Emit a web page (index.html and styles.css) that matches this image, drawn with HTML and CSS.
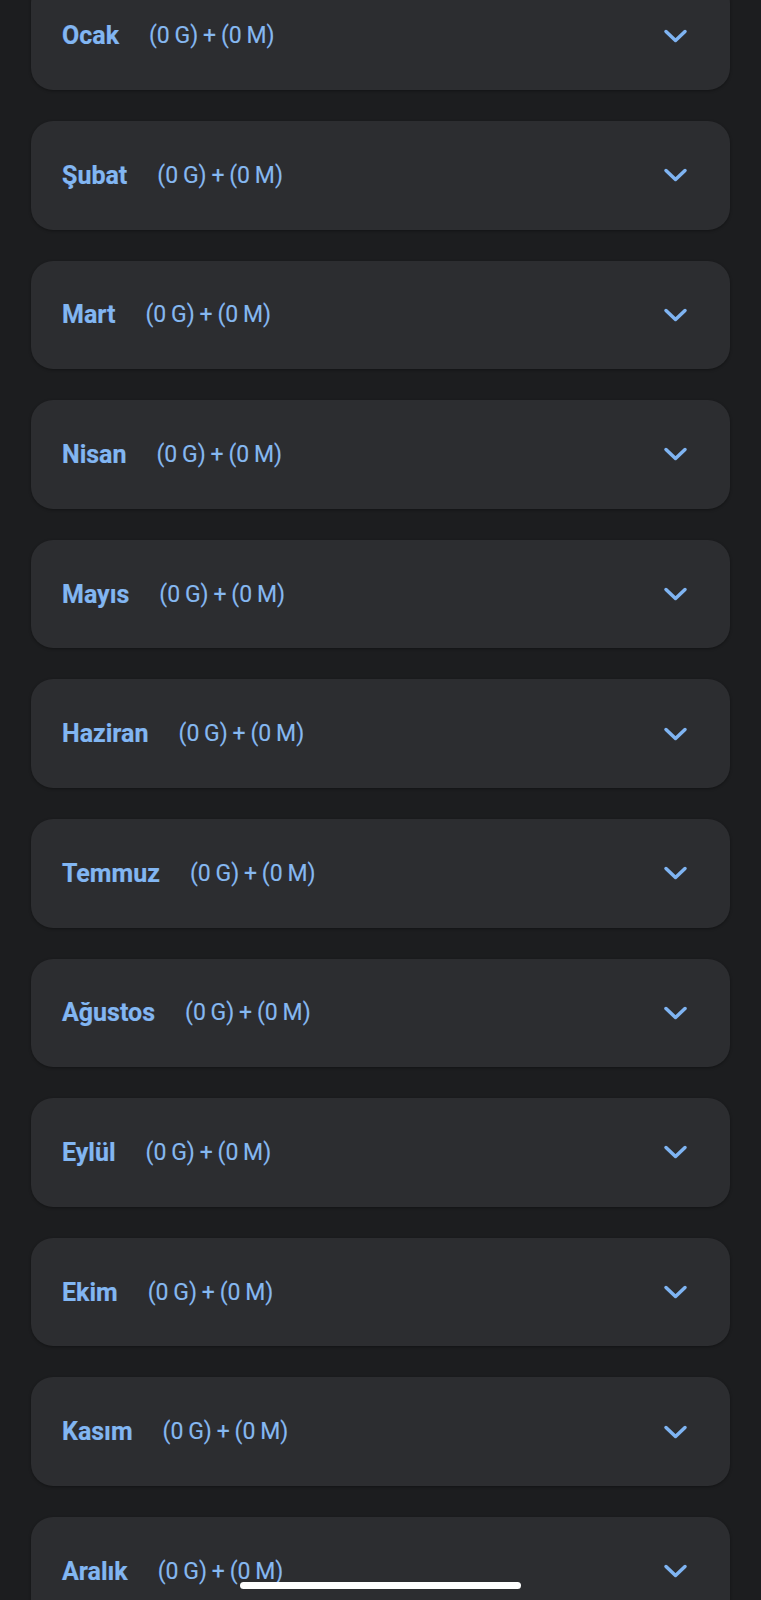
FILE: index.html
```html
<!DOCTYPE html>
<html lang="tr">
<head>
<meta charset="utf-8">
<link rel="stylesheet" href="styles.css">
</head>
<body>
<div class="list">
  <div class="card"><span class="name">Ocak</span><span class="sub">(0 G) + (0 M)</span><svg class="chev" viewBox="0 0 24 14"><polyline points="2.5,2.5 12,11.5 21.5,2.5"/></svg></div>
  <div class="card"><span class="name">Şubat</span><span class="sub">(0 G) + (0 M)</span><svg class="chev" viewBox="0 0 24 14"><polyline points="2.5,2.5 12,11.5 21.5,2.5"/></svg></div>
  <div class="card"><span class="name">Mart</span><span class="sub">(0 G) + (0 M)</span><svg class="chev" viewBox="0 0 24 14"><polyline points="2.5,2.5 12,11.5 21.5,2.5"/></svg></div>
  <div class="card"><span class="name">Nisan</span><span class="sub">(0 G) + (0 M)</span><svg class="chev" viewBox="0 0 24 14"><polyline points="2.5,2.5 12,11.5 21.5,2.5"/></svg></div>
  <div class="card"><span class="name">Mayıs</span><span class="sub">(0 G) + (0 M)</span><svg class="chev" viewBox="0 0 24 14"><polyline points="2.5,2.5 12,11.5 21.5,2.5"/></svg></div>
  <div class="card"><span class="name">Haziran</span><span class="sub">(0 G) + (0 M)</span><svg class="chev" viewBox="0 0 24 14"><polyline points="2.5,2.5 12,11.5 21.5,2.5"/></svg></div>
  <div class="card"><span class="name">Temmuz</span><span class="sub">(0 G) + (0 M)</span><svg class="chev" viewBox="0 0 24 14"><polyline points="2.5,2.5 12,11.5 21.5,2.5"/></svg></div>
  <div class="card"><span class="name">Ağustos</span><span class="sub">(0 G) + (0 M)</span><svg class="chev" viewBox="0 0 24 14"><polyline points="2.5,2.5 12,11.5 21.5,2.5"/></svg></div>
  <div class="card"><span class="name">Eylül</span><span class="sub">(0 G) + (0 M)</span><svg class="chev" viewBox="0 0 24 14"><polyline points="2.5,2.5 12,11.5 21.5,2.5"/></svg></div>
  <div class="card"><span class="name">Ekim</span><span class="sub">(0 G) + (0 M)</span><svg class="chev" viewBox="0 0 24 14"><polyline points="2.5,2.5 12,11.5 21.5,2.5"/></svg></div>
  <div class="card"><span class="name">Kasım</span><span class="sub">(0 G) + (0 M)</span><svg class="chev" viewBox="0 0 24 14"><polyline points="2.5,2.5 12,11.5 21.5,2.5"/></svg></div>
  <div class="card"><span class="name">Aralık</span><span class="sub">(0 G) + (0 M)</span><svg class="chev" viewBox="0 0 24 14"><polyline points="2.5,2.5 12,11.5 21.5,2.5"/></svg></div>
</div>
<div class="home-indicator"></div>
</body>
</html>
```
FILE: styles.css
```css
html, body {
  margin: 0;
  padding: 0;
  background: #1c1d1f;
  height: 1600px;
  overflow: hidden;
  font-family: Roboto, "Noto Sans", "Liberation Sans", sans-serif;
}
.list {
  padding: 0 31px;
  margin-top: -18.6px;
  display: flex;
  flex-direction: column;
  gap: 31px;
}
.card {
  height: 108.6px;
  flex: none;
  box-sizing: border-box;
  background: #2c2d30;
  border-radius: 22px;
  box-shadow: 0 1px 3px rgba(0,0,0,0.35);
  display: flex;
  align-items: center;
  padding: 0 42px 0 31px;
  color: #82b6f2;
}
.name {
  font-weight: 700;
  font-size: 25px;
  -webkit-text-stroke: 0.2px #82b6f2;
}
.sub {
  font-size: 23px;
  margin-left: 30px;
  color: #86b8f0;
  word-spacing: -0.9px;
  -webkit-text-stroke: 0.15px #86b8f0;
}
.chev {
  margin-left: auto;
  width: 25px;
  height: 14px;
  fill: none;
  stroke: #7fb4f2;
  stroke-width: 3.5;
  stroke-linecap: round;
  stroke-linejoin: round;
}
.home-indicator {
  position: fixed;
  left: 240px;
  top: 1582px;
  width: 281px;
  height: 7px;
  border-radius: 4px;
  background: #ffffff;
}
```
